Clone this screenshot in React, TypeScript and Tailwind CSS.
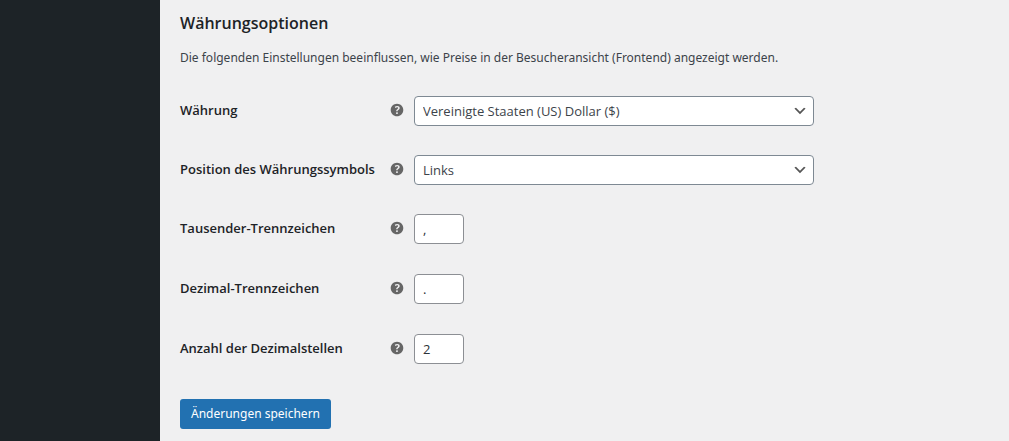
import React, { useState } from 'react';

interface FieldRowProps {
  id: string;
  label: string;
  children: React.ReactNode;
}

interface SelectFieldProps {
  id: string;
  value: string;
  options: string[];
  onChange: (value: string) => void;
}

interface TextFieldProps {
  id: string;
  type?: string;
  value: string;
  onChange: (value: string) => void;
}

const HelpIcon: React.FC = () => (
  <svg viewBox="0 0 20 20" className="size-[18px] shrink-0 fill-[#666666]" aria-hidden="true">
    <path d="M17 10c0-3.87-3.14-7-7-7-3.87 0-7 3.13-7 7s3.13 7 7 7c3.86 0 7-3.13 7-7zm-6.3 1.48H9.14v-.43c0-.38.08-.7.24-.98s.46-.57.88-.89c.41-.29.68-.53.81-.71.14-.18.2-.39.2-.62 0-.25-.09-.44-.28-.58-.19-.13-.45-.19-.79-.19-.58 0-1.25.19-2 .57l-.64-1.28c.87-.49 1.8-.74 2.77-.74.81 0 1.45.2 1.92.58.48.39.71.91.71 1.55 0 .43-.09.8-.29 1.11-.19.32-.57.67-1.11 1.06-.38.28-.61.49-.71.63-.1.15-.15.34-.15.57v.35zm-1.47 2.74c-.18-.17-.27-.42-.27-.73 0-.33.08-.58.26-.75s.43-.25.77-.25c.32 0 .57.09.75.26s.27.42.27.74c0 .3-.09.55-.27.72-.18.18-.43.27-.75.27-.33 0-.58-.09-.76-.26z" />
  </svg>
);

const FieldRow: React.FC<FieldRowProps> = ({ id, label, children }) => (
  <div className="flex items-start">
    <div className="flex h-7 shrink-0 items-center">
      <label htmlFor={id} className="w-52 text-[13px] leading-5 font-semibold text-[#1d2327]">
        {label}
      </label>
      <HelpIcon />
    </div>
    <div className="ml-2 flex-1">{children}</div>
  </div>
);

const SelectField: React.FC<SelectFieldProps> = ({ id, value, options, onChange }) => (
  <div className="relative max-w-[400px]">
    <select
      id={id}
      value={value}
      onChange={(e) => onChange(e.target.value)}
      className="block h-[30px] w-full appearance-none rounded border border-[#7e8993] bg-white pt-[2px] pr-6 pl-2 text-[13px] text-[#3c434a]"
    >
      {options.map((option) => (
        <option key={option}>{option}</option>
      ))}
    </select>
    <svg
      viewBox="0 0 20 20"
      className="pointer-events-none absolute top-[7px] right-[6px] size-4 fill-[#555555]"
      aria-hidden="true"
    >
      <path d="M5 6l5 5 5-5 2 1-7 7-7-7 2-1z" />
    </svg>
  </div>
);

const TextField: React.FC<TextFieldProps> = ({ id, type = 'text', value, onChange }) => (
  <input
    id={id}
    type={type}
    value={value}
    onChange={(e) => onChange(e.target.value)}
    className="block h-[30px] w-[50px] rounded border border-[#8c8f94] bg-white px-2 text-[13px] text-[#2c3338]"
  />
);

const App: React.FC = () => {
  const [currency, setCurrency] = useState<string>('Vereinigte Staaten (US) Dollar ($)');
  const [position, setPosition] = useState<string>('Links');
  const [thousandSep, setThousandSep] = useState<string>(',');
  const [decimalSep, setDecimalSep] = useState<string>('.');
  const [decimals, setDecimals] = useState<string>('2');

  return (
    <div className="flex min-h-screen bg-[#f0f0f1] font-['Open_Sans','Noto_Sans',sans-serif]">
      <aside className="w-40 shrink-0 bg-[#1d2327]"></aside>

      <main className="min-w-0 flex-1 px-5 pt-3 pb-3">
        <h2 className="text-base leading-[22px] font-semibold text-[#1d2327]">Währungsoptionen</h2>
        <p className="mt-[14px] font-['Noto_Sans','Open_Sans',sans-serif] text-xs leading-5 text-[#3c434a]">
          Die folgenden Einstellungen beeinflussen, wie Preise in der Besucheransicht (Frontend) angezeigt werden.
        </p>

        <form onSubmit={(e) => e.preventDefault()}>
          <div className="mt-7 flex flex-col gap-[29px]">
            <FieldRow id="currency" label="Währung">
              <SelectField
                id="currency"
                value={currency}
                options={['Vereinigte Staaten (US) Dollar ($)', 'Euro (€)']}
                onChange={setCurrency}
              />
            </FieldRow>
            <FieldRow id="currency-pos" label="Position des Währungssymbols">
              <SelectField
                id="currency-pos"
                value={position}
                options={['Links', 'Rechts']}
                onChange={setPosition}
              />
            </FieldRow>
          </div>

          <div className="mt-[29px] flex flex-col gap-[30px]">
            <FieldRow id="thousand-sep" label="Tausender-Trennzeichen">
              <TextField id="thousand-sep" value={thousandSep} onChange={setThousandSep} />
            </FieldRow>
            <FieldRow id="decimal-sep" label="Dezimal-Trennzeichen">
              <TextField id="decimal-sep" value={decimalSep} onChange={setDecimalSep} />
            </FieldRow>
            <FieldRow id="decimals" label="Anzahl der Dezimalstellen">
              <TextField id="decimals" type="number" value={decimals} onChange={setDecimals} />
            </FieldRow>
          </div>

          <button
            type="submit"
            className="mt-[35px] block h-[30px] cursor-pointer rounded-[3px] bg-[#2271b1] px-[11px] font-['Noto_Sans','Open_Sans',sans-serif] text-xs text-white hover:bg-[#135e96]"
          >
            Änderungen speichern
          </button>
        </form>
      </main>
    </div>
  );
};

export default App;
